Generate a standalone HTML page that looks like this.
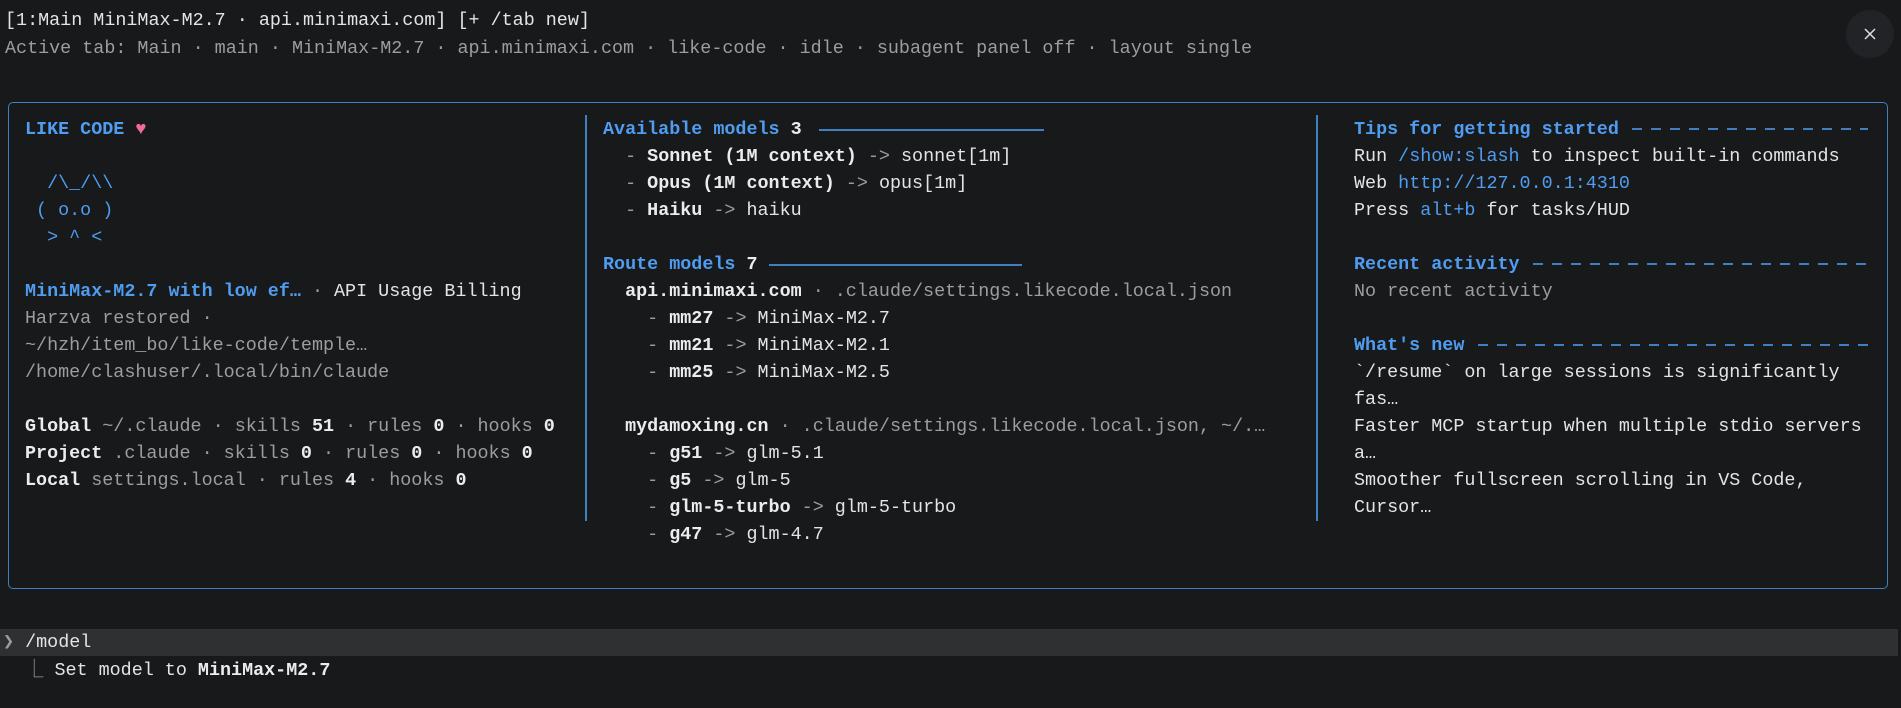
<!DOCTYPE html>
<html><head><meta charset="utf-8"><style>
html,body{margin:0;padding:0;background:#18191b;width:1901px;height:708px;overflow:hidden}
body{font-family:"Liberation Mono","DejaVu Sans Mono",monospace;font-size:18.4px;color:#e4e4e4;position:relative}
.l{position:absolute;white-space:pre;height:27px;line-height:27px}
.d{color:#9d9d9d}.b{color:#4f9cf0}.w{font-weight:bold;color:#ececec}.bb{color:#4f9cf0;font-weight:bold}
.box{position:absolute;left:8px;top:102px;width:1878px;height:485px;border:1.5px solid #3f7fc2;border-radius:5px}
.vr{position:absolute;width:1.5px;background:#3f7fc2;top:115px;height:406px}
.hr{position:absolute;height:1.5px;background:#3f7fc2}
.dash{position:absolute;height:2px;background:repeating-linear-gradient(90deg,#3f7fc2 0 10px,transparent 10px 19px)}
</style></head><body>
<div class="l" style="left:5px;top:7px">[1:Main MiniMax-M2.7 · api.minimaxi.com] [+ /tab new]</div>
<div class="l d" style="left:5px;top:35px">Active tab: Main · main · MiniMax-M2.7 · api.minimaxi.com · like-code · idle · subagent panel off · layout single</div>
<div style="position:absolute;left:1846px;top:10px;width:48px;height:48px;border-radius:50%;background:#222326"></div>
<svg style="position:absolute;left:1863px;top:27px" width="14" height="14"><path d="M2 2L12 12M12 2L2 12" stroke="#e0e0e0" stroke-width="1.5"/></svg>
<div class="box"></div>
<div class="vr" style="left:585px"></div>
<div class="vr" style="left:1316px"></div>

<!-- col1 -->
<div class="l bb" style="left:25px;top:116px">LIKE CODE <span style="color:#f06a9a">♥</span></div>
<div class="l b" style="left:25px;top:170px">  /\_/\\</div>
<div class="l b" style="left:25px;top:197px"> ( o.o )</div>
<div class="l b" style="left:25px;top:224px">  &gt; ^ &lt;</div>
<div class="l" style="left:25px;top:278px"><span class="bb">MiniMax-M2.7 with low ef…</span><span class="d"> · </span>API Usage Billing</div>
<div class="l d" style="left:25px;top:305px">Harzva restored ·</div>
<div class="l d" style="left:25px;top:332px">~/hzh/item_bo/like-code/temple…</div>
<div class="l d" style="left:25px;top:359px">/home/clashuser/.local/bin/claude</div>
<div class="l d" style="left:25px;top:413px"><span class="w">Global</span> ~/.claude · skills <span class="w">51</span> · rules <span class="w">0</span> · hooks <span class="w">0</span></div>
<div class="l d" style="left:25px;top:440px"><span class="w">Project</span> .claude · skills <span class="w">0</span> · rules <span class="w">0</span> · hooks <span class="w">0</span></div>
<div class="l d" style="left:25px;top:467px"><span class="w">Local</span> settings.local · rules <span class="w">4</span> · hooks <span class="w">0</span></div>

<!-- col2 -->
<div class="l bb" style="left:603px;top:116px">Available models <span class="w">3</span></div>
<div class="hr" style="left:819px;width:225px;top:129px"></div>
<div class="l" style="left:603px;top:143px"><span class="d">  - </span><span class="w">Sonnet (1M context)</span><span class="d"> -&gt; </span>sonnet[1m]</div>
<div class="l" style="left:603px;top:170px"><span class="d">  - </span><span class="w">Opus (1M context)</span><span class="d"> -&gt; </span>opus[1m]</div>
<div class="l" style="left:603px;top:197px"><span class="d">  - </span><span class="w">Haiku</span><span class="d"> -&gt; </span>haiku</div>
<div class="l bb" style="left:603px;top:251px">Route models <span class="w">7</span></div>
<div class="hr" style="left:769px;width:253px;top:264px"></div>
<div class="l" style="left:603px;top:278px"><span class="w">  api.minimaxi.com</span><span class="d"> · .claude/settings.likecode.local.json</span></div>
<div class="l" style="left:603px;top:305px"><span class="d">    - </span><span class="w">mm27</span><span class="d"> -&gt; </span>MiniMax-M2.7</div>
<div class="l" style="left:603px;top:332px"><span class="d">    - </span><span class="w">mm21</span><span class="d"> -&gt; </span>MiniMax-M2.1</div>
<div class="l" style="left:603px;top:359px"><span class="d">    - </span><span class="w">mm25</span><span class="d"> -&gt; </span>MiniMax-M2.5</div>
<div class="l" style="left:603px;top:413px"><span class="w">  mydamoxing.cn</span><span class="d"> · .claude/settings.likecode.local.json, ~/.…</span></div>
<div class="l" style="left:603px;top:440px"><span class="d">    - </span><span class="w">g51</span><span class="d"> -&gt; </span>glm-5.1</div>
<div class="l" style="left:603px;top:467px"><span class="d">    - </span><span class="w">g5</span><span class="d"> -&gt; </span>glm-5</div>
<div class="l" style="left:603px;top:494px"><span class="d">    - </span><span class="w">glm-5-turbo</span><span class="d"> -&gt; </span>glm-5-turbo</div>
<div class="l" style="left:603px;top:521px"><span class="d">    - </span><span class="w">g47</span><span class="d"> -&gt; </span>glm-4.7</div>

<!-- col3 -->
<div class="l bb" style="left:1354px;top:116px">Tips for getting started</div>
<div class="dash" style="left:1632px;width:236px;top:128px"></div>
<div class="l" style="left:1354px;top:143px">Run <span class="b">/show:slash</span> to inspect built-in commands</div>
<div class="l" style="left:1354px;top:170px">Web <span class="b">http://127.0.0.1:4310</span></div>
<div class="l" style="left:1354px;top:197px">Press <span class="b">alt+b</span> for tasks/HUD</div>
<div class="l bb" style="left:1354px;top:251px">Recent activity</div>
<div class="dash" style="left:1533px;width:340px;top:263px"></div>
<div class="l d" style="left:1354px;top:278px">No recent activity</div>
<div class="l bb" style="left:1354px;top:332px">What's new</div>
<div class="dash" style="left:1478px;width:390px;top:344px"></div>
<div class="l" style="left:1354px;top:359px">`/resume` on large sessions is significantly</div>
<div class="l" style="left:1354px;top:386px">fas…</div>
<div class="l" style="left:1354px;top:413px">Faster MCP startup when multiple stdio servers</div>
<div class="l" style="left:1354px;top:440px">a…</div>
<div class="l" style="left:1354px;top:467px">Smoother fullscreen scrolling in VS Code,</div>
<div class="l" style="left:1354px;top:494px">Cursor…</div>

<!-- bottom -->
<div style="position:absolute;left:0;top:629px;width:1898px;height:27px;background:#2f3032"></div>
<div class="l" style="left:3px;top:629px"><span class="d">❯</span> /model</div>
<div class="l" style="left:25px;top:657px"><span class="d">⎿</span> Set model to <span class="w">MiniMax-M2.7</span></div>
</body></html>
